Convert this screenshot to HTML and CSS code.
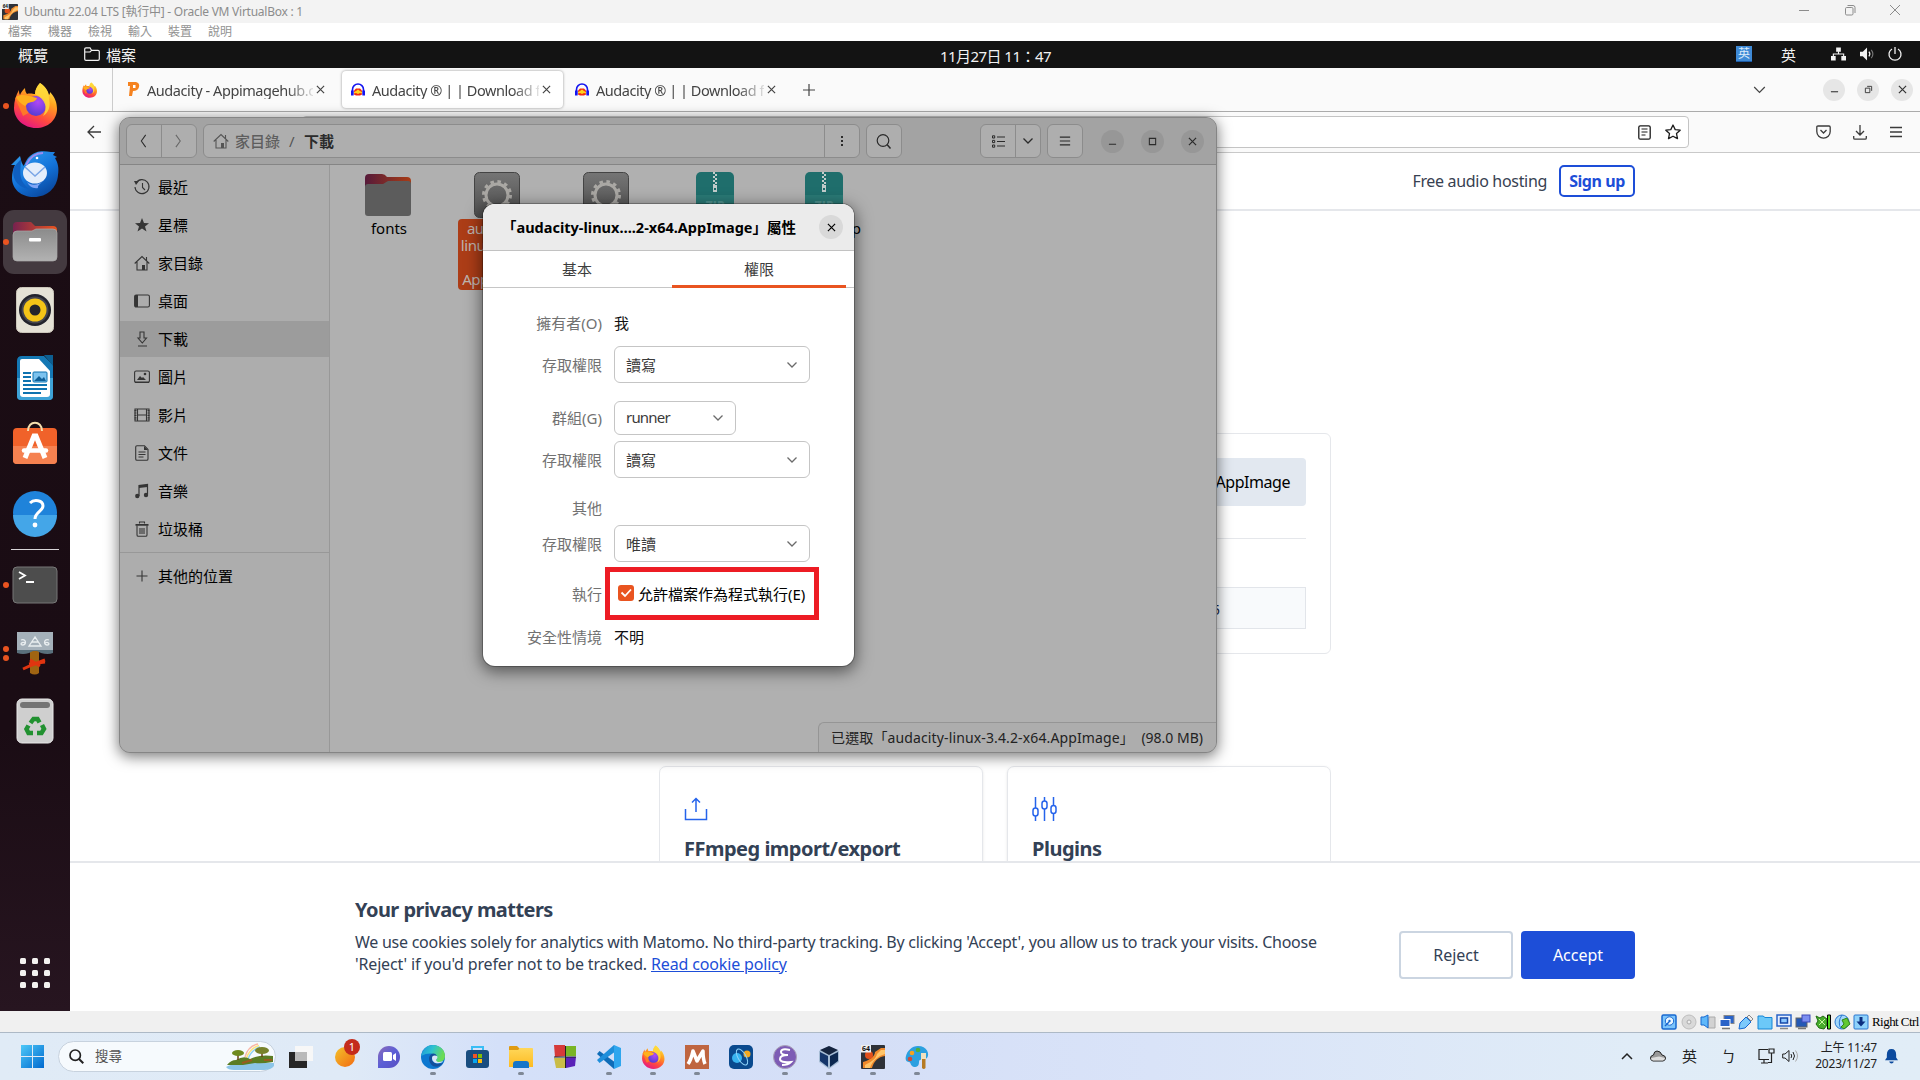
FILE: index.html
```html
<!DOCTYPE html>
<html lang="zh-Hant">
<head>
<meta charset="utf-8">
<title>Ubuntu 22.04 LTS [執行中] - Oracle VM VirtualBox : 1</title>
<link rel="stylesheet" href="styles.css">
</head>
<body>
<svg class="defs" width="0" height="0">
  <defs>
    <linearGradient id="gFox" x1="0.8" y1="0" x2="0.3" y2="1"><stop offset="0" stop-color="#fff44f"/><stop offset=".35" stop-color="#ffa21f"/><stop offset=".7" stop-color="#ff4a3f"/><stop offset="1" stop-color="#e31587"/></linearGradient>
    <radialGradient id="gOrb" cx=".6" cy=".3" r=".8"><stop offset="0" stop-color="#b148f5"/><stop offset="1" stop-color="#4a3bd0"/></radialGradient>
    <linearGradient id="gBird" x1="0" y1="0" x2=".6" y2="1"><stop offset="0" stop-color="#35a4f4"/><stop offset=".6" stop-color="#1373d9"/><stop offset="1" stop-color="#0a4ba3"/></linearGradient>
    <linearGradient id="gFolder" x1="0" y1="0" x2="1" y2="0"><stop offset="0" stop-color="#77224f"/><stop offset="1" stop-color="#e9541f"/></linearGradient>
    <linearGradient id="gDimFolder" x1="0" y1="0" x2="1" y2="0"><stop offset="0" stop-color="#561a3a"/><stop offset="1" stop-color="#a83c16"/></linearGradient>
    <linearGradient id="gGrey" x1="0" y1="0" x2="0" y2="1"><stop offset="0" stop-color="#8b8b8b"/><stop offset="1" stop-color="#b2b2b2"/></linearGradient>
    <linearGradient id="gGear" x1="0" y1="0" x2="0" y2="1"><stop offset="0" stop-color="#757575"/><stop offset="1" stop-color="#4e4e4e"/></linearGradient>
    <linearGradient id="gWin" x1="0" y1="0" x2="1" y2="1"><stop offset="0" stop-color="#4cc8f8"/><stop offset="1" stop-color="#0069cf"/></linearGradient>
    <linearGradient id="gSun" x1="0" y1="0" x2="1" y2="1"><stop offset="0" stop-color="#f3c22b"/><stop offset="1" stop-color="#f26a12"/></linearGradient>
    <linearGradient id="gChat" x1="0" y1="0" x2="1" y2="1"><stop offset="0" stop-color="#8d6bb8"/><stop offset=".5" stop-color="#5b5fd6"/><stop offset="1" stop-color="#5a4fc0"/></linearGradient>
    <linearGradient id="gEdge" x1="0" y1="0" x2="1" y2=".3"><stop offset="0" stop-color="#1c93d9"/><stop offset=".5" stop-color="#2ec2d0"/><stop offset="1" stop-color="#6bdc55"/></linearGradient>
    <linearGradient id="gYel" x1="0" y1="0" x2="0" y2="1"><stop offset="0" stop-color="#ffd75a"/><stop offset="1" stop-color="#fdbb22"/></linearGradient>
    <symbol id="firefox" viewBox="0 0 44 46">
      <path fill="url(#gFox)" d="M27 1c6 4 8 8 9 12 1-1 1-2 1-3 5 5 7 11 7 17 0 11-9 19-21 19S1 37 1 26C1 19 3 13 6 8c0 2 0 3 1 5 1-3 3-5 5-7 0 3 1 5 2 6 3-1 6 0 8 0 0-4 2-8 5-11z"/>
      <path fill="#ff8a1e" d="M2 16c6-4 12-4 19-3l3 5-9 3 4 8-9 5z" opacity=".75"/>
      <circle cx="23" cy="24" r="10" fill="url(#gOrb)"/>
      <path fill="#ffb01e" d="M3 15c5-3 9-2 13-1l8 2c-1 4-6 4-9 5l-3 3c-4-2-7-5-9-9z"/>
      <path fill="#ffd93b" d="M27 1c6 4 9 10 9 16 2 8-1 14-6 17 5-8 3-16-8-22 0-4 2-8 5-11z" opacity=".85"/>
    </symbol>
    <symbol id="audacity" viewBox="0 0 14 14">
      <path d="M1.500 12V7a5.500 5.500 0 0 1 11 0v5" fill="none" stroke="#1414f0" stroke-width="1.600"/>
      <path fill="#f32a12" d="M3 12V8l2-2h4l2 2v4l-2 1H5z"/><path fill="#ffd21e" d="M3 9.500l2-1 2-1.500 2 1.500 2 1v1.500l-2-.5-2 1-2-1-2 .5z"/>
      <path fill="#1414f0" d="M0 8h2.600v5H0zM11.400 8H14v5h-2.600z"/>
    </symbol>
    <symbol id="x" viewBox="0 0 10 10"><path d="M1 1l8 8M9 1L1 9" fill="none" stroke="currentColor" stroke-width="1.300"/></symbol>
    <symbol id="down" viewBox="0 0 12 8"><path d="M1.500 1.500L6 6l4.500-4.500" fill="none" stroke="currentColor" stroke-width="1.300"/></symbol>
    <symbol id="burger" viewBox="0 0 14 14"><path d="M1 2.500h12M1 7h12M1 11.500h12" stroke="currentColor" stroke-width="1.300"/></symbol>
    <symbol id="home" viewBox="0 0 16 16"><path d="M.7 8.500L8 1.500l7.300 7M3 7v8h10V7M12.500 5.500V2" fill="none" stroke="currentColor" stroke-width="1.100"/><path d="M8 10h3v5H8z" fill="currentColor"/></symbol>
    <symbol id="gear" viewBox="0 0 46 46">
      <rect x=".5" y=".5" width="45" height="45" rx="5" fill="url(#gGear)" stroke="#444"/>
      <circle cx="23" cy="23" r="11" fill="none" stroke="#aaa8a4" stroke-width="3"/>
      <circle cx="23" cy="23" r="13.500" fill="none" stroke="#aaa8a4" stroke-width="3" stroke-dasharray="3.530 3.540"/>
    </symbol>
    <symbol id="zip" viewBox="0 0 38 46">
      <rect width="38" height="46" rx="5" fill="#1f6e6c"/><path d="M0 23h38v18a5 5 0 0 1-5 5H5a5 5 0 0 1-5-5z" fill="#2a7a76"/>
      <path d="M18 0v14" stroke="#c2cccb" stroke-width="2" stroke-dasharray="2 2"/><path d="M20 2v12" stroke="#c2cccb" stroke-width="2" stroke-dasharray="2 2"/>
      <path d="M17 13h4v7h-4z" fill="#c2cccb"/><path d="M18 16h2v2h-2z" fill="#1f6e6c"/>
      <text x="19" y="38" text-anchor="middle" class="zip-label">ZIP</text>
    </symbol>
    <symbol id="vb64" viewBox="0 0 24 24">
      <rect width="24" height="24" rx="1" fill="#2f3238"/><path d="M24 3h-4l-6 4c0 4-5 8-12 10v6h9c2-7 6-11 13-12z" fill="#f08a2c"/><path d="M24 5h-4l-4 4c-1 5-6 8-12 11v3h5c2-7 8-12 15-14z" fill="#ffc56a"/>
      <circle cx="8" cy="10" r="4" fill="#e2501b"/><rect width="10" height="7.500" fill="#eee"/><text x="5" y="6.300" text-anchor="middle" class="tiny64">64</text>
    </symbol>
  </defs>
</svg>

<div class="screen">
  <header class="vb-title">
    <svg class="vb-icon"><use href="#vb64"/></svg>
    <span class="vb-name">Ubuntu 22.04 LTS [執行中] - Oracle VM VirtualBox : 1</span>
    <div class="vb-controls">
      <svg viewBox="0 0 12 12"><path d="M1 6.500h10" stroke="currentColor"/></svg>
      <svg viewBox="0 0 12 12"><rect x="1.500" y="3.500" width="7.500" height="7.500" rx="1.200" fill="none" stroke="currentColor"/><path d="M3.500 1.500h5.500a2 2 0 0 1 2 2v5.500" fill="none" stroke="currentColor"/></svg>
      <svg viewBox="0 0 12 12"><path d="M1 1l10 10M11 1L1 11" stroke="currentColor"/></svg>
    </div>
  </header>
  <nav class="vb-menu"><span>檔案</span><span>機器</span><span>檢視</span><span>輸入</span><span>裝置</span><span>說明</span></nav>

  <div class="guest">
    <div class="topbar">
      <span class="overview">概覽</span>
      <svg class="tb-folder" viewBox="0 0 16 14"><path d="M.7 12V2Q.7.800 2 .800h4l1.500 2.500H14q1.300 0 1.300 1.200V12q0 1.300-1.300 1.300H2Q.7 13.300.7 12zM1 5h5l1.500-1.700" fill="none" stroke="currentColor" stroke-width="1.200"/></svg>
      <span>檔案</span>
      <span class="clock">11月27日 11：47</span>
      <div class="tray">
        <span class="ime-blue">英</span>
        <span class="ime">英</span>
        <svg class="t-net" viewBox="0 0 16 14"><path d="M5.500 0h5v4.500h-5zM0 9h5v5H0zM11 9h5v5h-5z" fill="currentColor"/><path d="M8 4v3M2.500 9V7h11v2" fill="none" stroke="currentColor" stroke-width="1.200"/></svg>
        <svg class="t-vol" viewBox="0 0 16 14"><path d="M0 4.500h3L7.500 0v14L3 9.500H0z" fill="currentColor"/><path d="M9.500 4.500q2 2.500 0 5" fill="none" stroke="currentColor" stroke-width="1.300"/><path d="M12 2.500q3.500 4.500 0 9" fill="none" stroke="#777" stroke-width="1.200"/></svg>
        <svg class="t-pow" viewBox="0 0 14 14"><path d="M4 2a6 6 0 1 0 6 0M7 0v7" fill="none" stroke="currentColor" stroke-width="1.300"/></svg>
      </div>
    </div>

    <div class="workspace">
      <aside class="dock">
        <div class="tile one fx"><svg width="44" height="46"><use href="#firefox"/></svg></div>
        <div class="tile"><svg width="48" height="46" viewBox="0 0 48 46"><path d="M0 14L9 5c1 3 1 6 3 9 1 3 2-4 6-8C25-1 33 0 40 1h4l-2 3 4 2-2 1c3 5 4 10 3 17-1 13-11 22-24 22C10 46 1 38 1 27c0-5 1-9 3-13z" fill="url(#gBird)"/><path d="M3 16l7-8c0 12-4 20 8 30C5 36 0 26 3 16z" fill="#0f5fc0"/><ellipse cx="24" cy="22" rx="12" ry="10.500" fill="#e4eefb"/><path d="M14 16l10 9 10-9" fill="none" stroke="#7aa6e6" stroke-width="1.500"/><path d="M16 31c4 4 11 4 17-2-2 3-7 5-6 8-5 1-9-2-11-6z" fill="#7fa5f5"/><path d="M15 14c4-8 9-12 17-12" fill="none" stroke="#9b8cf0" stroke-width="2"/><circle cx="26" cy="7" r="1.300" fill="#fff"/></svg></div>
        <div class="tile one active"><svg width="46" height="42" viewBox="0 0 46 42"><path d="M1 5q0-4 4-4h14l4 4h18q4 0 4 4v12H1z" fill="url(#gFolder)"/><path d="M1 14q0-4 4-4h15l4-2h17q4 0 4 4v24q0 4-4 4H5q-4 0-4-4z" fill="url(#gGrey)" stroke="#aaa" stroke-width=".7"/><rect x="17" y="17" width="12" height="3.500" rx="1" fill="#fff"/></svg></div>
        <div class="tile"><svg width="38" height="46" viewBox="0 0 38 46"><rect x=".5" y=".5" width="37" height="45" rx="5" fill="#e5e1d6" stroke="#cbc6ba"/><circle cx="19" cy="23" r="16" fill="#22222c"/><circle cx="19" cy="23" r="13.500" fill="#45454f"/><circle cx="19" cy="23" r="11.500" fill="#f4c417"/><circle cx="19" cy="23" r="5.500" fill="#25252b"/></svg></div>
        <div class="tile"><svg width="38" height="46" viewBox="0 0 38 46"><path d="M6 1h22l9 9v31q0 4-4 4H5q-4 0-4-4V6q0-5 5-5z" fill="#1478b4"/><path d="M1 23h36v18q0 4-4 4H5q-4 0-4-4z" fill="#3ea2d6"/><path d="M6 4h17L34 16v23q0 3-3 3H7q-3 0-3-3V6q0-2 2-2z" fill="#fff"/><path d="M28 0h9v11z" fill="#0d5f91"/><path d="M7 18h8M7 22h8M7 26h8M7 30h24M7 34h24M7 38h18" stroke="#0f73b0" stroke-width="1.800"/><rect x="17" y="17" width="14" height="10" rx="1" fill="#7cc3ef" stroke="#0f73b0"/><path d="M18 26l5-5 3 3 2-2 2 4z" fill="#0f5f98"/></svg></div>
        <div class="tile store"><svg width="46" height="44" viewBox="0 0 46 44"><rect x="1" y="7" width="44" height="36" rx="4" fill="#f0622a"/><path d="M1 25h44v14q0 4-4 4H5q-4 0-4-4z" fill="#f58150"/><path d="M16 10c0-11 14-11 14 0" fill="none" stroke="#f5dfae" stroke-width="2"/><path d="M13 37l9-22h2l9 22" fill="none" stroke="#fff" stroke-width="5"/><path d="M12 29.500h22" stroke="#fff" stroke-width="4.500" stroke-linecap="round"/></svg></div>
        <div class="tile help"><svg width="46" height="46" viewBox="0 0 46 46"><circle cx="23" cy="23" r="22" fill="#1f83da"/><path d="M1 25a22 22 0 0 0 44 0z" fill="#44a6e8"/><path d="M18 13c4-4 13-3 13 3 0 5-8 6-8 13" fill="none" stroke="#fff" stroke-width="3"/><circle cx="23" cy="35" r="2.400" fill="#fff"/></svg></div>
        <hr class="dock-line">
        <div class="tile one"><svg width="46" height="38" viewBox="0 0 46 38"><rect x="1" y="1" width="44" height="36" rx="4" fill="#4d4d4d" stroke="#777"/><path d="M7 6l6 3.500L7 13M14 16h8" fill="none" stroke="#fff" stroke-width="1.800"/></svg></div>
        <div class="tile two"><svg width="38" height="44" viewBox="0 0 38 44"><path d="M14 20h9v22q-4 3-9 0z" fill="#a06412"/><path d="M1 2h36v20q-5 2-12 0l-4-2h-4l-4 2q-6 2-12 0z" fill="#5a707c"/><path d="M1 1h36v18H1z" fill="#a5b1ba"/><path d="M19 6l-6 9h12zM16 11h6M5 9c5-2 6 5 2 5s-1-4 2-2M33 9c-5-2-6 5-2 5s1-4-2-2" fill="none" stroke="#e9eef0" stroke-width="1.300"/><path d="M7 38l9-4 13-5M14 29l10 6M13 33l16-2" stroke="#e03410" stroke-width="3" fill="none"/></svg></div>
        <div class="tile"><svg width="38" height="46" viewBox="0 0 38 46"><rect x="1" y="1" width="36" height="44" rx="5" fill="#cfcfcf" stroke="#e9e9e9"/><rect x="4" y="4" width="30" height="6" rx="3" fill="#747474"/><g fill="none" stroke="#219130" stroke-width="4.500"><path d="M14.500 25l3-4h4l2 3.500"/><path d="M26 27l2 4-2.500 4H21"/><path d="M17 35h-4.500L10.500 31l2-3.500"/></g></svg></div>
        <div class="apps"><i></i><i></i><i></i><i></i><i></i><i></i><i></i><i></i><i></i></div>
      </aside>

      <main class="browser">
        <div class="tabs">
          <div class="pinned"><svg width="15" height="16"><use href="#firefox"/></svg></div>
          <div class="tab"><svg class="fav" viewBox="0 0 14 15"><path d="M2 0l8 0q4 1 3 5-1 4-6 4l-1 5H3L4 4 2 4z" fill="#f5821f"/><path d="M7 3h2.500v3H7z" fill="#fff"/></svg><span class="tab-name hub">Audacity - Appimagehub.c</span><svg class="tx"><use href="#x"/></svg></div>
          <div class="tab selected"><svg class="fav"><use href="#audacity"/></svg><span class="tab-name aud">Audacity ® | | Download f</span><svg class="tx"><use href="#x"/></svg></div>
          <div class="tab"><svg class="fav"><use href="#audacity"/></svg><span class="tab-name aud">Audacity ® | | Download f</span><svg class="tx"><use href="#x"/></svg></div>
          <svg class="newtab" viewBox="0 0 12 12"><path d="M6 0v12M0 6h12" stroke="currentColor" stroke-width="1.200"/></svg>
          <svg class="alltabs" viewBox="0 0 12 8"><path d="M.7 1L6 6.500 11.300 1" fill="none" stroke="currentColor" stroke-width="1.200"/></svg>
          <div class="rounds">
            <b><svg viewBox="0 0 10 10"><path d="M1 7.500h8" stroke="currentColor" stroke-width="1.200"/></svg></b>
            <b><svg viewBox="0 0 10 10"><path d="M1.500 3.500h5v5h-5zM3.500 1.500h5v5" fill="none" stroke="currentColor"/></svg></b>
            <b><svg><use href="#x"/></svg></b>
          </div>
        </div>
        <div class="toolbar">
          <svg class="back" viewBox="0 0 14 14"><path d="M14 7H1M7 1L1 7l6 6" fill="none" stroke="currentColor" stroke-width="1.300"/></svg>
          <div class="url">
            <svg width="13" height="15" viewBox="0 0 13 15"><rect x=".8" y=".8" width="11.400" height="13.400" rx="1.500" fill="none" stroke="currentColor" stroke-width="1.300"/><path d="M3.500 4h6M3.500 7h6M3.500 10h4" stroke="currentColor" stroke-width="1.200"/></svg>
            <svg width="16" height="16" viewBox="0 0 16 16"><path d="M8 1l2.200 4.600 5 .6-3.700 3.400 1 5L8 12.200l-4.500 2.400 1-5L.8 6.200l5-.6z" fill="none" stroke="currentColor" stroke-width="1.300" stroke-linejoin="round"/></svg>
          </div>
          <div class="tools">
            <svg width="15" height="14" viewBox="0 0 15 14"><path d="M2 1h11q1.200 0 1.200 1.200V6.500a6.700 6.700 0 0 1-13.400 0V2.200Q.8 1 2 1zM4.500 5l3 3 3-3" fill="none" stroke="currentColor" stroke-width="1.300"/></svg>
            <svg width="14" height="15" viewBox="0 0 14 15"><path d="M7 0v10M3 6l4 4 4-4M.7 11v2q0 1.200 1.200 1.200h10.200q1.200 0 1.200-1.200v-2" fill="none" stroke="currentColor" stroke-width="1.300"/></svg>
            <svg width="14" height="14"><use href="#burger"/></svg>
          </div>
        </div>
        <div class="site-head"><span class="host">Free audio hosting</span><span class="signup">Sign up</span></div>
        <div class="site-main">
          <section class="download">
            <div class="dl-button">AppImage</div>
            <div class="dl-line"></div>
            <div class="dl-sum">5</div>
          </section>
          <div class="features">
            <section><svg width="24" height="24" viewBox="0 0 24 24"><path d="M1.500 12v10.500h21V12M12 15V2M8 5.500L12 1.500l4 4" fill="none" stroke="#2563eb" stroke-width="1.500"/></svg><h3 class="ff">FFmpeg import/export</h3></section>
            <section><svg width="25" height="24" viewBox="0 0 25 24"><path d="M3.500 0v11M3.500 19v5M12.500 0v4M12.500 12v12M21.500 0v8.500M21.500 16.500V24" stroke="#2563eb" stroke-width="1.500"/><g fill="none" stroke="#2563eb" stroke-width="1.500"><rect x="1" y="11" width="5" height="8" rx="2.500"/><rect x="10" y="4" width="5" height="8" rx="2.500"/><rect x="19" y="8.500" width="5" height="8" rx="2.500"/></g></svg><h3 class="pl">Plugins</h3></section>
          </div>
        </div>
        <div class="cookie">
          <div class="cookie-text">
            <h3>Your privacy matters</h3>
            <p><span class="c1">We use cookies solely for analytics with Matomo. No third-party tracking. By clicking 'Accept', you allow us to track your visits. Choose</span><br><span class="c2">'Reject' if you'd prefer not to be tracked. <a>Read cookie policy</a></span></p>
          </div>
          <div class="cookie-btn reject">Reject</div>
          <div class="cookie-btn accept">Accept</div>
        </div>
      </main>
    </div>
  </div>

  <footer class="vb-status">
    <svg viewBox="0 0 16 16"><rect x="1" y="1" width="14" height="14" rx="1.500" fill="#7cc4fb" stroke="#1768d0" stroke-width="1.500"/><circle cx="8.500" cy="7" r="4.200" fill="#e8f5ff" stroke="#1768d0"/><circle cx="8.500" cy="7" r="1.200" fill="#1768d0"/><path d="M4 12l4-4" stroke="#1768d0" stroke-width="1.500"/></svg>
    <svg viewBox="0 0 16 16"><circle cx="8" cy="8" r="7" fill="#d9d9d9" stroke="#bdbdbd"/><circle cx="8" cy="8" r="2" fill="#eee" stroke="#aaa"/></svg>
    <svg viewBox="0 0 16 16"><path d="M9 3h6v11H8z" fill="#d2d2d2" stroke="#aaa"/><path d="M1 3h3l4-2v13l-4-3H1z" fill="#5fb8fa" stroke="#1768d0"/></svg>
    <svg viewBox="0 0 16 16"><rect x="5" y="1.500" width="10" height="8" fill="#2a63c8" stroke="#888"/><rect x="1" y="5.500" width="10" height="7" fill="#2a63c8" stroke="#fff"/><path d="M3 14.500h8" stroke="#777" stroke-width="1.500"/></svg>
    <svg viewBox="0 0 16 16"><path d="M1 15l1-6 6-6 5 5-6 6z" fill="#7cc9fb" stroke="#1768d0"/><path d="M9 3l2-2 4 4-2 2z" fill="#eee" stroke="#888"/></svg>
    <svg viewBox="0 0 16 16"><path d="M1 15V2h5l2 1.500h7V15z" fill="#6cc8f8" stroke="#1586d6"/></svg>
    <svg viewBox="0 0 16 16"><rect x="1" y="1" width="14" height="11" fill="#e6efff" stroke="#2a63c8" stroke-width="1.500"/><rect x="4.500" y="4" width="7" height="5" fill="#8dc8ff" stroke="#1748a8" stroke-width="1.500"/><path d="M4 14.500h8" stroke="#888" stroke-width="1.500"/></svg>
    <svg viewBox="0 0 16 16"><rect x="1" y="4" width="11" height="9" fill="#2458b4" stroke="#666"/><rect x="7" y="1" width="8" height="7" fill="#7b8df0" stroke="#3d48b8"/><path d="M3 14.500h8" stroke="#777" stroke-width="1.500"/></svg>
    <svg viewBox="0 0 16 16"><path d="M1 2l4 2 3-2 4 3v6l-3 4-5-1-3-4 2-3z" fill="#48ad2c" stroke="#216d12"/><path d="M4 5l6 6M10 5l-6 6" stroke="#c8f5a0"/><path d="M12.500 1h3v14h-3z" fill="#52dd1f" stroke="#000"/></svg>
    <svg viewBox="0 0 16 16"><circle cx="8" cy="8" r="7" fill="#a3d7fa" stroke="#2a77d0"/><path d="M8 1q-5 7-1 14" fill="none" stroke="#2a77d0"/><path d="M8 6l5-2 3 6-6 5-3-2 3-3z" fill="#62c832" stroke="#31821a"/></svg>
    <svg viewBox="0 0 16 16"><rect x="1" y="1" width="14" height="14" rx="1" fill="#8fd2fb" stroke="#2a77d0"/><path d="M8 3v5" stroke="#0c2f80" stroke-width="3"/><path d="M3.500 7.500h9L8 12.500z" fill="#0c2f80"/></svg>
    <span class="host-key">Right Ctrl</span>
  </footer>

  <footer class="taskbar">
    <svg class="start" viewBox="0 0 23 23"><path d="M0 0h11v11H0zM12 0h11v11H12zM0 12h11v11H0zM12 12h11v11H12z" fill="url(#gWin)"/></svg>
    <div class="search">
      <svg width="15" height="15" viewBox="0 0 15 15"><circle cx="6.200" cy="6.200" r="5.200" fill="none" stroke="#222" stroke-width="1.700"/><path d="M10 10l4.300 4.300" stroke="#222" stroke-width="2"/></svg>
      <span>搜尋</span>
      <svg class="scene" viewBox="0 0 48 28"><path d="M19 14Q22 3 32 1" fill="none" stroke="#f9b6a6" stroke-width="1.500"/><path d="M20.500 15Q24 5 33 2.500" fill="none" stroke="#ffe37a" stroke-width="1.500"/><path d="M22 16Q25 7 34 4" fill="none" stroke="#8ed0f2" stroke-width="1.500"/><path d="M0 24q10-6 48-4v3q-3 4-10 4H8q-6 0-8-3z" fill="#8cc5e8"/><path d="M1 22q4-5 9-5 8-5 14-1 10-5 23-3v6q-12 2-18 1l-12 2z" fill="#5b7d24"/><path d="M12 17V9M36 14V6" stroke="#6b4317" stroke-width="1.500"/><ellipse cx="12" cy="10" rx="6" ry="3" fill="#6f8a1e"/><ellipse cx="36" cy="7.500" rx="7" ry="3.500" fill="#78822b"/><path d="M16 20l10-3M38 17h8" stroke="#9a5a20" stroke-width="2"/></svg>
    </div>
    <div class="apps-row">
      <div class="app"><svg viewBox="0 0 24 24"><path d="M0 7h18v16H0z" fill="#262626"/><path d="M6 1h18v15H6z" fill="#f7f7f7"/><path d="M6 7h12v9H6z" fill="#b9b9b9"/></svg></div>
      <div class="app"><svg viewBox="0 0 24 24"><circle cx="12" cy="12" r="10" fill="url(#gSun)"/></svg><em>1</em></div>
      <div class="app"><svg viewBox="0 0 24 24"><path d="M12 1a11 11 0 1 1 0 22H1V12A11 11 0 0 1 12 1z" fill="url(#gChat)"/><rect x="6" y="7" width="9" height="9" rx="1.500" fill="#fff"/><path d="M16 10l3-2v8l-3-2z" fill="#fff"/></svg></div>
      <div class="app run"><svg viewBox="0 0 24 24"><circle cx="12" cy="12" r="12" fill="#0d78d0"/><path d="M0 11C2 3 7 0 12 0c7 0 12 5 12 11 0 4-3 6-6 6-4 0-4-2-2-3 0-5-7-8-16-3z" fill="url(#gEdge)"/><path d="M8 13c1-5 6-6 8-2-3-1-5 0-5 3 0 4 5 6 11 4-4 6-14 5-14-5z" fill="#124f9c"/><path d="M11 13c0-3 3-3 5-2 1 1 0 3-1 4 1 3 4 2 7 1-1 3-11 4-11-3z" fill="#d8e6f8"/></svg></div>
      <div class="app"><svg viewBox="0 0 24 24"><path d="M7 6V2h11v4" fill="none" stroke="#39bdf5" stroke-width="2"/><rect x="1" y="5" width="23" height="18" rx="3" fill="#194d80"/><path d="M8 9h4v4H8z" fill="#f35325"/><path d="M13 9h4v4h-4z" fill="#81bc06"/><path d="M8 14h4v4H8z" fill="#05a6f0"/><path d="M13 14h4v4h-4z" fill="#ffba08"/></svg></div>
      <div class="app run"><svg viewBox="0 0 24 24"><path d="M0 2q0-1 1-1h7l3 3v3H0z" fill="#e09b12"/><path d="M0 5h9l2-2h12q1 0 1 1v18H0z" fill="url(#gYel)"/><path d="M4 23v-4q0-3 3-3h10q3 0 3 3v4z" fill="#1675c8"/></svg></div>
      <div class="app"><svg viewBox="0 0 24 24"><path d="M1 0l11 0 1 11-11 1z" fill="#d63a3a"/><path d="M13 1h10v10H13z" fill="#79b526"/><path d="M1 13h11v10l-9 0z" fill="#c9bc47"/><path d="M13 12h10l-1 9-9 2z" fill="#5a22b8"/><path d="M12.500 1v22M1 12h22" stroke="#222"/></svg></div>
      <div class="app run"><svg viewBox="0 0 24 24"><path d="M17 24L0 9l2.500-3L19 18z" fill="#0e6cb8"/><path d="M17 0L0 15l2.500 3L19 6z" fill="#1e8edb"/><path d="M17 0l7 3v18l-7 3z" fill="#2fa6ee"/></svg></div>
      <div class="app run"><svg viewBox="0 0 24 24"><use href="#firefox"/></svg></div>
      <div class="app run"><svg viewBox="0 0 24 24"><rect width="24" height="24" fill="#bf6540"/><path d="M3 19q3-4 5-13l4 10 6-10q0 8 2 13" fill="none" stroke="#fff" stroke-width="3.500" stroke-linejoin="round"/></svg></div>
      <div class="app"><svg viewBox="0 0 24 24"><rect width="24" height="24" rx="5" fill="#0a4a8e"/><circle cx="8" cy="13" r="5" fill="#38b4f0"/><circle cx="18" cy="9" r="3.500" fill="#f5a91e"/><ellipse cx="13" cy="12" rx="4" ry="9" fill="none" stroke="#8fd4fa" transform="rotate(-30 13 12)"/></svg></div>
      <div class="app run"><svg viewBox="0 0 24 24"><circle cx="12" cy="12" r="11.500" fill="#7d5cb5" stroke="#a9a2b8"/><path d="M17 5q-9-2-9 2 0 3 7 3-8 0-8 4 0 4 11 3-3 3-9 3" fill="none" stroke="#fff" stroke-width="2"/></svg></div>
      <div class="app run"><svg viewBox="0 0 24 24"><path d="M12 1l10 5v11l-10 7L2 17V6z" fill="#a6bcd4"/><path d="M12 1l9 4-9 5-9-5z" fill="#15243f"/><path d="M3 7l8 4v11l-8-6z" fill="#15356a"/><path d="M21 7l-8 4v11l8-6z" fill="#0d2850"/></svg></div>
      <div class="app run"><svg viewBox="0 0 24 24"><use href="#vb64"/></svg></div>
      <div class="app run"><svg viewBox="0 0 24 24"><path d="M13 1c9 0 12 8 9 12-3 3-8 0-8 4 0 3-1 5-5 5-4-1-3-5-5-5-3 0-4-3-3-6 1-5 6-10 12-10z" fill="#2ba0e0"/><circle cx="7" cy="8" r="2.300" fill="#f5a21e"/><circle cx="13" cy="5" r="2.300" fill="#4fae3c"/><circle cx="5" cy="14" r="2.300" fill="#cf4b38"/><path d="M16 8h5v7h-5z" fill="#efe1bf"/><path d="M17 14h3.500v9q-1.700 2-3.500 0z" fill="#b67a22"/></svg></div>
    </div>
    <div class="win-tray">
      <svg class="w-up" viewBox="0 0 12 8"><path d="M1 7l5-5 5 5" fill="none" stroke="#222" stroke-width="1.500"/></svg>
      <svg class="w-cloud" viewBox="0 0 16 12"><path d="M3 11h10q2.500-.5 2.500-3T12 5Q10.500 1 7 1 4 1 3.500 5 .5 5.500.5 8T3 11z" fill="#999" stroke="#222"/><path d="M3 10.500h10q2-1 2-2.500L9 6.500 1 8q0 2 2 2.500z" fill="#ddd"/></svg>
      <span class="w-ying">英</span>
      <span class="w-bo">ㄅ</span>
      <svg class="w-mon" viewBox="0 0 17 16"><path d="M10 1.500H1v10h10M6 11.500v3M3 15h7M11 1h5v4h-5zM13.500 5v9.500H10" fill="none" stroke="#222" stroke-width="1.200"/></svg>
      <svg class="w-spk" viewBox="0 0 16 14"><path d="M.7 5H3l4-3.500v11L3 9H.7z" fill="none" stroke="#222"/><path d="M9 5q1.500 2 0 4M11 3q3 4 0 8" fill="none" stroke="#222"/><path d="M13.500 1.500q4 5.500 0 11" fill="none" stroke="#aaa"/></svg>
      <div class="w-time"><span class="wt1">上午 11:47</span><span class="wt2">2023/11/27</span></div>
      <svg class="w-bell" viewBox="0 0 14 16"><path d="M7 0q5 0 5 6v3l2 3H0l2-3V6q0-6 5-6z" fill="#0b4a9e"/><path d="M4.500 13.500h5Q9 15.500 7 15.500T4.500 13.500z" fill="#0b4a9e"/></svg>
    </div>
  </footer>

  <div class="files">
    <div class="f-head">
      <div class="btns nav"><span><svg viewBox="0 0 8 16"><path d="M6.500 1L1.500 8l5 7" fill="none" stroke="currentColor" stroke-width="1.200"/></svg></span><span class="dim"><svg viewBox="0 0 8 16"><path d="M1 1l5 7-5 7" fill="none" stroke="currentColor" stroke-width="1.200"/></svg></span></div>
      <div class="btns path"><span class="crumbs"><svg><use href="#home"/></svg><b class="home">家目錄</b><i>/</i><b>下載</b></span><span class="kebab"><svg viewBox="0 0 4 12"><path d="M1 1h2v2H1zM1 5h2v2H1zM1 9h2v2H1z" fill="currentColor"/></svg></span></div>
      <div class="btns find"><span><svg width="15" height="15" viewBox="0 0 15 15"><circle cx="7" cy="6.500" r="5.800" fill="none" stroke="currentColor" stroke-width="1.200"/><path d="M11 10.500l3.500 4" stroke="currentColor" stroke-width="1.500"/></svg></span></div>
      <div class="btns view"><span><svg width="13" height="13" viewBox="0 0 13 13"><path d="M5 2h8M5 6.500h8M5 11h8" stroke="currentColor" stroke-width="1.200"/><path d="M.5.800h2.200V3H.5zM.5 5.400h2.200v2.200H.5zM.5 10h2.200v2.200H.5z" fill="none" stroke="currentColor"/></svg></span><span><svg width="12" height="8"><use href="#down"/></svg></span></div>
      <div class="btns more"><span><svg width="12" height="14"><use href="#burger"/></svg></span></div>
      <div class="f-rounds">
        <b><svg viewBox="0 0 10 10"><path d="M1 8h8" stroke="currentColor" stroke-width="1.200"/></svg></b>
        <b><svg viewBox="0 0 10 10"><path d="M1.500 1.500h7v7h-7z" fill="none" stroke="currentColor" stroke-width="1.200"/></svg></b>
        <b><svg><use href="#x"/></svg></b>
      </div>
    </div>
    <div class="f-body">
      <ul class="places">
        <li><svg viewBox="0 0 16 16"><path d="M2 4a7 7 0 1 1-1 4M8.500 4v4.500L11 11" fill="none" stroke="currentColor" stroke-width="1.100"/><path d="M0 2l5 0-3 4z" fill="currentColor"/></svg>最近</li>
        <li><svg viewBox="0 0 16 16"><path d="M8 1l2 5 5 .2-4 3.300 1.500 5L8 11.500l-4.500 3 1.500-5L1 6.200 6 6z" fill="currentColor"/></svg>星標</li>
        <li><svg><use href="#home"/></svg>家目錄</li>
        <li><svg viewBox="0 0 16 16"><rect x=".6" y="2" width="14.800" height="12" rx="1.500" fill="none" stroke="currentColor" stroke-width="1.100"/><path d="M1 2h3v12H1z" fill="currentColor"/></svg>桌面</li>
        <li class="on"><svg viewBox="0 0 16 16"><path d="M6 1h4v6h2.500L8.300 12 4 7h2zM4 15h9" fill="none" stroke="currentColor" stroke-width="1.100"/></svg>下載</li>
        <li><svg viewBox="0 0 16 16"><rect x=".6" y="2" width="14.800" height="11.500" rx="1.500" fill="none" stroke="currentColor" stroke-width="1.100"/><path d="M3 11l3-4 2 2 1-1 3 3zM1 12.500h14V14H1z" fill="currentColor"/><circle cx="11" cy="5" r="1.300" fill="currentColor"/></svg>圖片</li>
        <li><svg viewBox="0 0 16 16"><path d="M1 2h14v12H1zM3.500 2v12M12.500 2v12M3.500 8h9" fill="none" stroke="currentColor" stroke-width="1.100"/><path d="M1.500 3v10M14.500 3v10" stroke="currentColor" stroke-width="2" stroke-dasharray="1.200 1.200"/></svg>影片</li>
        <li><svg viewBox="0 0 16 16"><path d="M3 .7h7.500L14 4.500V14q0 1.300-1.300 1.300H3q-1.300 0-1.300-1.300V2Q1.700.7 3 .7zM4.500 7h7M4.500 9.500h7M4.500 12h5" fill="none" stroke="currentColor" stroke-width="1.100"/><path d="M10 1v4h4z" fill="currentColor"/></svg>文件</li>
        <li><svg viewBox="0 0 16 16"><path d="M5 13V2.500l8.500-1V11" fill="none" stroke="currentColor" stroke-width="1.200"/><path d="M5 2h8.500v2L5 5z" fill="currentColor"/><circle cx="3.300" cy="13" r="2.200" fill="currentColor"/><circle cx="12" cy="12" r="2.200" fill="currentColor"/></svg>音樂</li>
        <li><svg viewBox="0 0 16 16"><path d="M3 4.500V14q0 1.300 1.300 1.300h7.400Q13 15.300 13 14V4.500M6 7v6M8 7v6M10 7v6M5.500 2.500v-1.500h5v1.500" fill="none" stroke="currentColor" stroke-width="1.100"/><path d="M1.500 3h13v1.800h-13z" fill="currentColor"/></svg>垃圾桶</li>
        <li class="other"><svg viewBox="0 0 16 16"><path d="M8 2.500v11M2.500 8h11" stroke="currentColor" stroke-width="1.100"/></svg>其他的位置</li>
      </ul>
      <div class="f-view">
        <div class="grid">
          <figure><svg width="46" height="44" viewBox="0 0 46 44"><path d="M0 6q0-4 4-4h13q3 0 5 3h20q4 0 4 4v10H0z" fill="url(#gDimFolder)"/><path d="M0 15q0-3 3-3h15l5-3h20q3 0 3 3v29q0 3-3 3H3q-3 0-3-3z" fill="#5c5c5c"/></svg><figcaption class="folder-name">fonts</figcaption></figure>
          <figure class="picked"><svg width="46" height="46"><use href="#gear"/></svg><figcaption>audacity-<br>linux-3.4.2-<br>x64.<br>AppImage</figcaption></figure>
          <figure><svg width="46" height="46"><use href="#gear"/></svg></figure>
          <figure><svg width="38" height="46"><use href="#zip"/></svg></figure>
          <figure class="last"><svg width="38" height="46"><use href="#zip"/></svg><figcaption>p</figcaption></figure>
        </div>
        <div class="f-status"><span class="s1">已選取「audacity-linux-3.4.2-x64.AppImage」</span><span class="s2">(98.0 MB)</span></div>
      </div>
    </div>
  </div>

  <div class="dialog">
    <div class="d-head"><span>「audacity-linux….2-x64.AppImage」屬性</span><b class="d-close"><svg><use href="#x"/></svg></b></div>
    <div class="d-tabs"><span>基本</span><span class="cur">權限</span></div>
    <div class="d-body">
      <div class="row r1"><label>擁有者(O)</label><span>我</span></div>
      <div class="row r2"><label>存取權限</label><div class="combo">讀寫<svg><use href="#down"/></svg></div></div>
      <div class="row r3"><label>群組(G)</label><div class="combo small"><span>runner</span><svg><use href="#down"/></svg></div></div>
      <div class="row r4"><label>存取權限</label><div class="combo">讀寫<svg><use href="#down"/></svg></div></div>
      <div class="row r5"><label>其他</label></div>
      <div class="row r6"><label>存取權限</label><div class="combo">唯讀<svg><use href="#down"/></svg></div></div>
      <div class="row r7"><label>執行</label><span class="check"><svg viewBox="0 0 16 16"><rect width="16" height="16" rx="3" fill="#e95420"/><path d="M3.500 7.500l3.500 3.500 6-6.500" fill="none" stroke="#fff" stroke-width="1.800"/></svg>允許檔案作為程式執行(E)</span></div>
      <div class="row r8"><label>安全性情境</label><span>不明</span></div>
    </div>
  </div>
  <div class="mark"></div>
</div>
</body>
</html>
```
FILE: styles.css
```css
* { box-sizing: border-box; }
body { margin: 0; background: #fff; }
h3, p, ul, figure { margin: 0; padding: 0; }
svg { display: block; flex: none; overflow: visible; }
.defs { position: absolute; }
.screen { position: relative; width: 1920px; height: 1080px; overflow: hidden; display: flex; flex-direction: column; font: 15px/18px "Noto Sans", "Noto Sans CJK TC", sans-serif; color: #111; white-space: nowrap; }
.zip-label { font: 800 12px "Open Sans", sans-serif; fill: #4f9390; }
.tiny64 { font: 700 7px "Open Sans", sans-serif; fill: #111; }

/* Host window */
.vb-title { height: 23px; flex: none; background: #f3f3f3; display: flex; align-items: center; padding-left: 2px; color: #8c8c8c; font-size: 12px; }
.vb-icon { width: 16px; height: 16px; margin-right: 6px; }
.vb-name { letter-spacing: -0.250px; }
.vb-controls { margin-left: auto; display: flex; gap: 33.500px; padding: 0 19px 3px 0; }
.vb-controls svg { width: 12px; height: 12px; }
.vb-menu { height: 18px; flex: none; background: #fff; display: flex; gap: 16px; padding-left: 8px; color: #929292; font-size: 12px; }
.guest { height: 970px; flex: none; display: flex; flex-direction: column; }

/* GNOME top bar */
.topbar { height: 27px; flex: none; background: #131313; color: #f2f2f2; display: flex; align-items: center; position: relative; padding: 1px 0 0 18px; }
.topbar > svg { margin: -3px 6px 0 36px; width: 16px; height: 14px; }
.clock { position: absolute; left: 940px; top: 6px; letter-spacing: -0.550px; }
.tray { margin-left: auto; display: flex; align-items: center; padding-right: 18px; }
.tray svg { height: 14px; margin-top: -2px; }
.ime-blue { width: 16px; height: 16px; background: #3f8ad6; color: #dcebfa; font-size: 12px; line-height: 15px; text-align: center; margin: -2px 29px 0 0; border-bottom: 1px solid #1c5aa5; }
.ime { margin-right: 35px; }
.t-net { width: 15px; margin-right: 14px; }
.t-vol { width: 15px; margin-right: 13px; }
.t-pow { width: 14px; }

/* Dock */
.workspace { flex: 1; display: flex; min-height: 0; }
.dock { width: 70px; flex: none; background: linear-gradient(#1b0d14, #1a0c14 70%, #271520); padding-top: 6px; display: flex; flex-direction: column; align-items: center; gap: 4px; }
.tile { width: 64px; height: 64px; flex: none; border-radius: 11px; display: flex; align-items: center; justify-content: center; position: relative; }
.tile.active { background: #443a40; }
.tile.one::before, .tile.two::before, .tile.two::after { content: ""; position: absolute; left: 0; top: 29px; width: 6px; height: 6px; border-radius: 50%; background: #e95420; }
.tile.two::before { top: 25px; }
.tile.two::after { top: 34px; }
.fx, .help { padding-bottom: 2px; }
.store { padding-bottom: 6px; }
.dock-line { width: 48px; height: 1px; border: 0; background: #d8d5d7; margin: -1px 0; flex: none; }
.apps { margin-top: auto; margin-bottom: 23px; display: grid; grid-template-columns: repeat(3, 6px); gap: 6px; }
.apps i { height: 6px; border-radius: 1.500px; background: #f3f1ef; }

/* Browser */
.browser { flex: 1; display: flex; flex-direction: column; background: #fff; min-width: 0; }
.tabs { height: 44px; flex: none; background: #fafafa; border-bottom: 1px solid #ababab; display: flex; align-items: center; color: #444; }
.pinned { width: 43px; height: 43px; border-right: 1px solid #ccc; display: flex; align-items: center; padding-left: 12px; }
.tab { width: 222px; height: 37px; margin: 0 0 0 3px; display: flex; align-items: center; padding: 0 12px 0 9px; border-radius: 4px; }
.pinned + .tab { margin-left: 4px; padding-right: 14px; }
.tab.selected { width: 221px; background: #fff; box-shadow: 0 0 3px rgba(0,0,0,.4); }
.fav { width: 14px; height: 15px; margin-right: 7px; }
.tab-name { flex: 1; min-width: 0; font-size: 14.500px; -webkit-mask-image: linear-gradient(90deg, #000 84%, rgba(0,0,0,.15) 100%); mask-image: linear-gradient(90deg, #000 84%, rgba(0,0,0,.15) 100%); }
.hub { letter-spacing: -0.430px; }
.aud { letter-spacing: -0.460px; }
.tx { width: 9px; height: 9px; margin-left: 3px; }
.newtab { width: 12px; height: 12px; margin-left: 15px; }
.alltabs { width: 13px; height: 8px; margin-left: auto; margin-right: 57px; }
.rounds { display: flex; gap: 12px; padding-right: 7px; }
.rounds b, .f-rounds b, .d-close { border-radius: 50%; display: flex; align-items: center; justify-content: center; }
.rounds b { width: 22px; height: 22px; background: #e6e6e6; color: #333; }
.rounds svg, .f-rounds svg, .d-close svg { width: 9px; height: 9px; }
.toolbar { height: 41px; flex: none; background: #fafafa; border-bottom: 1px solid #c9c9c9; display: flex; align-items: center; color: #3b3b3b; padding-left: 17px; }
.back { width: 14px; height: 14px; }
.url { width: 1387px; height: 32px; margin-left: 201px; background: #fff; border: 1px solid #c4c4c4; border-radius: 4px; display: flex; justify-content: flex-end; align-items: center; gap: 14px; padding-right: 7px; color: #1d1d1d; }
.tools { margin-left: auto; display: flex; align-items: center; gap: 22px; padding-right: 17px; }
.site-head { height: 58px; flex: none; border-bottom: 2px solid #e5e7eb; padding: 0 285px 0 0; display: flex; justify-content: flex-end; align-items: center; color: #374151; font-size: 16px; }
.host { letter-spacing: -0.320px; margin-right: 12px; }
.signup { width: 76px; height: 32px; border: 2px solid #1d4ed8; border-radius: 5px; color: #1d4ed8; font-weight: 700; line-height: 28px; text-align: center; letter-spacing: -0.450px; }
.site-main { flex: 1; min-height: 0; overflow: hidden; width: 672px; margin: 0 auto; padding: 222px 0 0; }
.download { height: 221px; border: 1px solid #e5e7eb; border-radius: 6px; padding: 24px; display: flex; flex-direction: column; color: #000; font-size: 16px; }
.dl-button { height: 48px; background: #e2e8f0; border-radius: 4px; line-height: 48px; text-align: right; padding-right: 16px; letter-spacing: -0.450px; }
.dl-line { height: 1px; background: #e5e7eb; margin: 32px 0 48px; }
.dl-sum { height: 42px; background: #f8fafc; border: 1px solid #e2e5ea; line-height: 43px; text-align: right; padding-right: 85px; color: #1e2a4a; font-size: 14px; }
.features { display: flex; gap: 24px; margin-top: 112px; }
.features section { width: 324px; height: 240px; border: 1px solid #e5e7eb; border-radius: 7px; box-shadow: 0 1px 3px rgba(0,0,0,.1); padding: 30px 24px; color: #334155; }
.features h3 { font-size: 20px; line-height: 26px; margin-top: 15px; }
.ff, .pl { letter-spacing: -0.500px; }
.cookie { height: 150px; flex: none; border-top: 2px solid #e5e7eb; display: flex; padding: 0 285px; align-items: flex-start; font-size: 16px; color: #334155; }
.cookie-text { flex: 1; padding-top: 34px; }
.cookie-text h3 { font-size: 20px; line-height: 26px; letter-spacing: -0.550px; }
.cookie-text p { font-size: 16px; line-height: 22px; margin-top: 8px; }
.c1 { letter-spacing: -0.255px; }
.c2 { letter-spacing: -0.150px; }
.cookie-text a { color: #1d4ed8; text-decoration: underline; }
.cookie-btn { width: 114px; height: 48px; margin: 68px 0 0 8px; border-radius: 4px; line-height: 48px; text-align: center; }
.reject { border: 2px solid #cbd5e1; line-height: 45px; }
.accept { background: #1d4ed8; color: #fff; }

/* VirtualBox status strip */
.vb-status { height: 21px; flex: none; background: #f0f0f0; display: flex; align-items: center; justify-content: flex-end; gap: 3.150px; }
.vb-status svg { width: 16px; height: 16px; }
.host-key { font: 13px/16px "Liberation Serif", serif; color: #000; width: 48px; letter-spacing: -0.550px; }

/* Windows taskbar */
.taskbar { height: 48px; flex: none; border-top: 1px solid #adb9c6; background: linear-gradient(90deg, #e0ebf6, #dfeaf7 18%, #d4e0f9 26%, #d5dff7 45%, #d9e3f8 60%, #e0ecf7 85%, #e1edf7); display: flex; align-items: center; padding-left: 21px; }
.start { width: 23px; height: 23px; }
.search { width: 218px; height: 31px; margin-left: 14px; border: 1px solid #c7d2de; border-radius: 16px; background: #f6fafd; display: flex; align-items: center; padding-left: 10px; font-size: 13.500px; color: #555; }
.search span { margin: -2px 0 0 11px; }
.scene { width: 48px; height: 28px; margin-left: auto; margin-right: 1px; }
.apps-row { display: flex; margin-left: 3px; }
.app { width: 44px; height: 47px; display: flex; justify-content: center; align-items: center; position: relative; }
.app svg { width: 24px; height: 24px; }
.app.run::after { content: ""; position: absolute; left: 19px; bottom: 5px; width: 6px; height: 3px; border-radius: 2px; background: #7f8896; }
.app em { position: absolute; left: 21px; top: 6px; width: 16px; height: 16px; border-radius: 50%; background: #c42b1c; color: #fff; font: 11px/16px "Noto Sans", sans-serif; text-align: center; }
.win-tray { margin-left: auto; display: flex; align-items: center; padding: 0 22px 1px 0; color: #222; }
.w-up { width: 12px; height: 8px; margin-right: 17px; }
.w-cloud { width: 16px; height: 12px; margin-right: 16px; }
.w-ying { margin-right: 24px; }
.w-bo { margin-right: 22px; }
.w-ying, .w-bo { padding-bottom: 1px; }
.w-mon { width: 17px; height: 16px; margin-right: 7px; }
.w-spk { width: 16px; height: 14px; margin-right: 15px; }
.w-time { width: 64px; font-size: 12px; line-height: 16px; display: flex; flex-direction: column; align-items: flex-end; margin-right: 8px; }
.w-bell { width: 13px; height: 15px; }
.wt1, .wt2 { letter-spacing: -0.200px; }

/* Files window */
.files { position: absolute; left: 119px; top: 117px; width: 1098px; height: 636px; border: 1px solid #858585; border-radius: 11px; box-shadow: 0 3px 14px 1px rgba(0,0,0,.5); overflow: hidden; display: flex; flex-direction: column; background: #b0b0b0; }
.f-head { height: 47px; flex: none; background: #a3a3a3; border-bottom: 1px solid #858585; display: flex; align-items: center; padding-left: 6px; color: #2b2b2b; }
.btns { height: 34px; display: flex; border: 1px solid #8c8c8c; border-radius: 6px; background: #aeaeae; }
.btns > span { display: flex; align-items: center; justify-content: center; flex: 1; }
.btns > span + span { border-left: 1px solid #8c8c8c; }
.nav { width: 71px; margin-right: 6px; }
.nav svg { width: 7px; height: 16px; margin-right: 1px; }
.dim { color: #666; }
.path { width: 657px; margin-right: 6px; }
.btns > .crumbs { justify-content: flex-start; padding-left: 9px; }
.crumbs svg { width: 16px; height: 16px; margin-right: 6px; color: #555; }
.crumbs .home { color: #5e5e5e; font-weight: 500; }
.crumbs i { margin: 0 9.500px 0 9px; font-style: normal; color: #555; }
.btns > .kebab { flex: none; width: 35px; }
.kebab svg { width: 4px; height: 12px; }
.find { width: 36px; margin-right: 78px; }
.find svg { margin-right: 1px; }
.view { width: 61px; margin-right: 6px; }
.view > span + span { flex: none; width: 25px; }
.more { width: 36px; margin-right: 18px; }
.f-rounds { display: flex; gap: 17px; }
.f-rounds b { width: 23px; height: 23px; background: #979797; }
.f-body { flex: 1; display: flex; min-height: 0; }
.places { list-style: none; width: 210px; flex: none; background: #adadad; border-right: 1px solid #989898; padding-top: 4px; color: #000; }
.places li { height: 36px; margin-bottom: 2px; display: flex; align-items: center; padding-left: 14px; }
.places svg { width: 16px; height: 16px; margin-right: 8px; color: #353535; }
.places .on { background: #9c9c9c; }
.places .other { margin-top: 5px; height: 43px; padding-top: 4px; border-top: 1px solid #989898; }
.f-view { flex: 1; display: flex; flex-direction: column; justify-content: space-between; align-items: flex-end; }
.grid { width: 100%; display: flex; padding: 7px 0 0 19px; }
.grid figure { width: 78px; margin-right: 31px; display: flex; flex-direction: column; align-items: center; text-align: center; color: #000; }
.grid figcaption { line-height: 17px; padding: 1px 4px; margin-top: 1px; }
.grid .folder-name { padding: 3px 3px 0 5px; }
.picked figcaption { width: 78px; height: 71px; border-radius: 4px; background: #ac3d17; color: #bfb5b0; letter-spacing: -0.450px; }
.picked figcaption { padding: 1px 0; }
.last figcaption { width: 78px; text-align: right; position: relative; left: 2px; }
.f-status { height: 30px; width: 398px; border: 1px solid #959595; border-width: 1px 0 0 1px; border-radius: 6px 0 0 0; background: #adadad; display: flex; align-items: center; justify-content: space-between; padding: 1px 13px 0 12px; color: #222; font-size: 14px; }
.s1 { letter-spacing: 0.130px; }

/* Properties dialog */
.dialog { position: absolute; left: 483px; top: 204px; width: 371px; height: 462px; border-radius: 12px; background: #fff; overflow: hidden; box-shadow: 0 0 0 1px rgba(0,0,0,.25), 0 4px 16px 2px rgba(0,0,0,.5); display: flex; flex-direction: column; }
.d-head { height: 47px; background: #ebebeb; border-bottom: 1px solid #c2c2c2; display: flex; align-items: center; justify-content: space-between; padding: 0 11px 0 19px; font-weight: 700; color: #000; font-size: 14.500px; }
.d-close { width: 24px; height: 24px; background: #d9d9d9; }
.d-tabs { height: 37px; border-bottom: 1px solid #c6c6c6; display: flex; color: #3d3d3d; padding: 0 8px 0 7px; }
.d-tabs span { width: 174px; height: 37px; line-height: 37px; text-align: center; }
.d-tabs span + span { margin-left: auto; }
.d-tabs .cur { border-bottom: 3px solid #e95420; }
.d-body { padding-top: 16px; }
.row { display: flex; align-items: center; }
.row label { width: 119px; margin-right: 12px; text-align: right; color: #727272; }
.combo { width: 196px; height: 37px; border: 1px solid #c5c5c5; border-radius: 6px; display: flex; align-items: center; justify-content: space-between; padding: 0 11px; color: #3b3b3b; }
.combo svg { width: 12px; height: 8px; color: #6b6b6b; }
.combo.small { width: 122px; height: 34px; }
.combo.small span { letter-spacing: -0.800px; padding-bottom: 2px; }
.r1 { height: 38px; }
.r2 { height: 37px; margin-top: 4px; }
.r3 { height: 34px; margin-top: 18px; }
.r4 { height: 37px; margin-top: 6px; }
.r5 { height: 33px; margin-top: 13px; }
.r6 { height: 37px; margin-top: 1px; }
.r7 { height: 37px; margin-top: 13px; }
.r8 { height: 36px; margin-top: 7px; }
.check { display: flex; align-items: center; padding-left: 4px; color: #000; }
.check svg { width: 16px; height: 16px; margin-right: 4px; margin-top: -2px; }
.mark { position: absolute; left: 605px; top: 567px; width: 214px; height: 53px; border: 5px solid #ed1c24; }
```
